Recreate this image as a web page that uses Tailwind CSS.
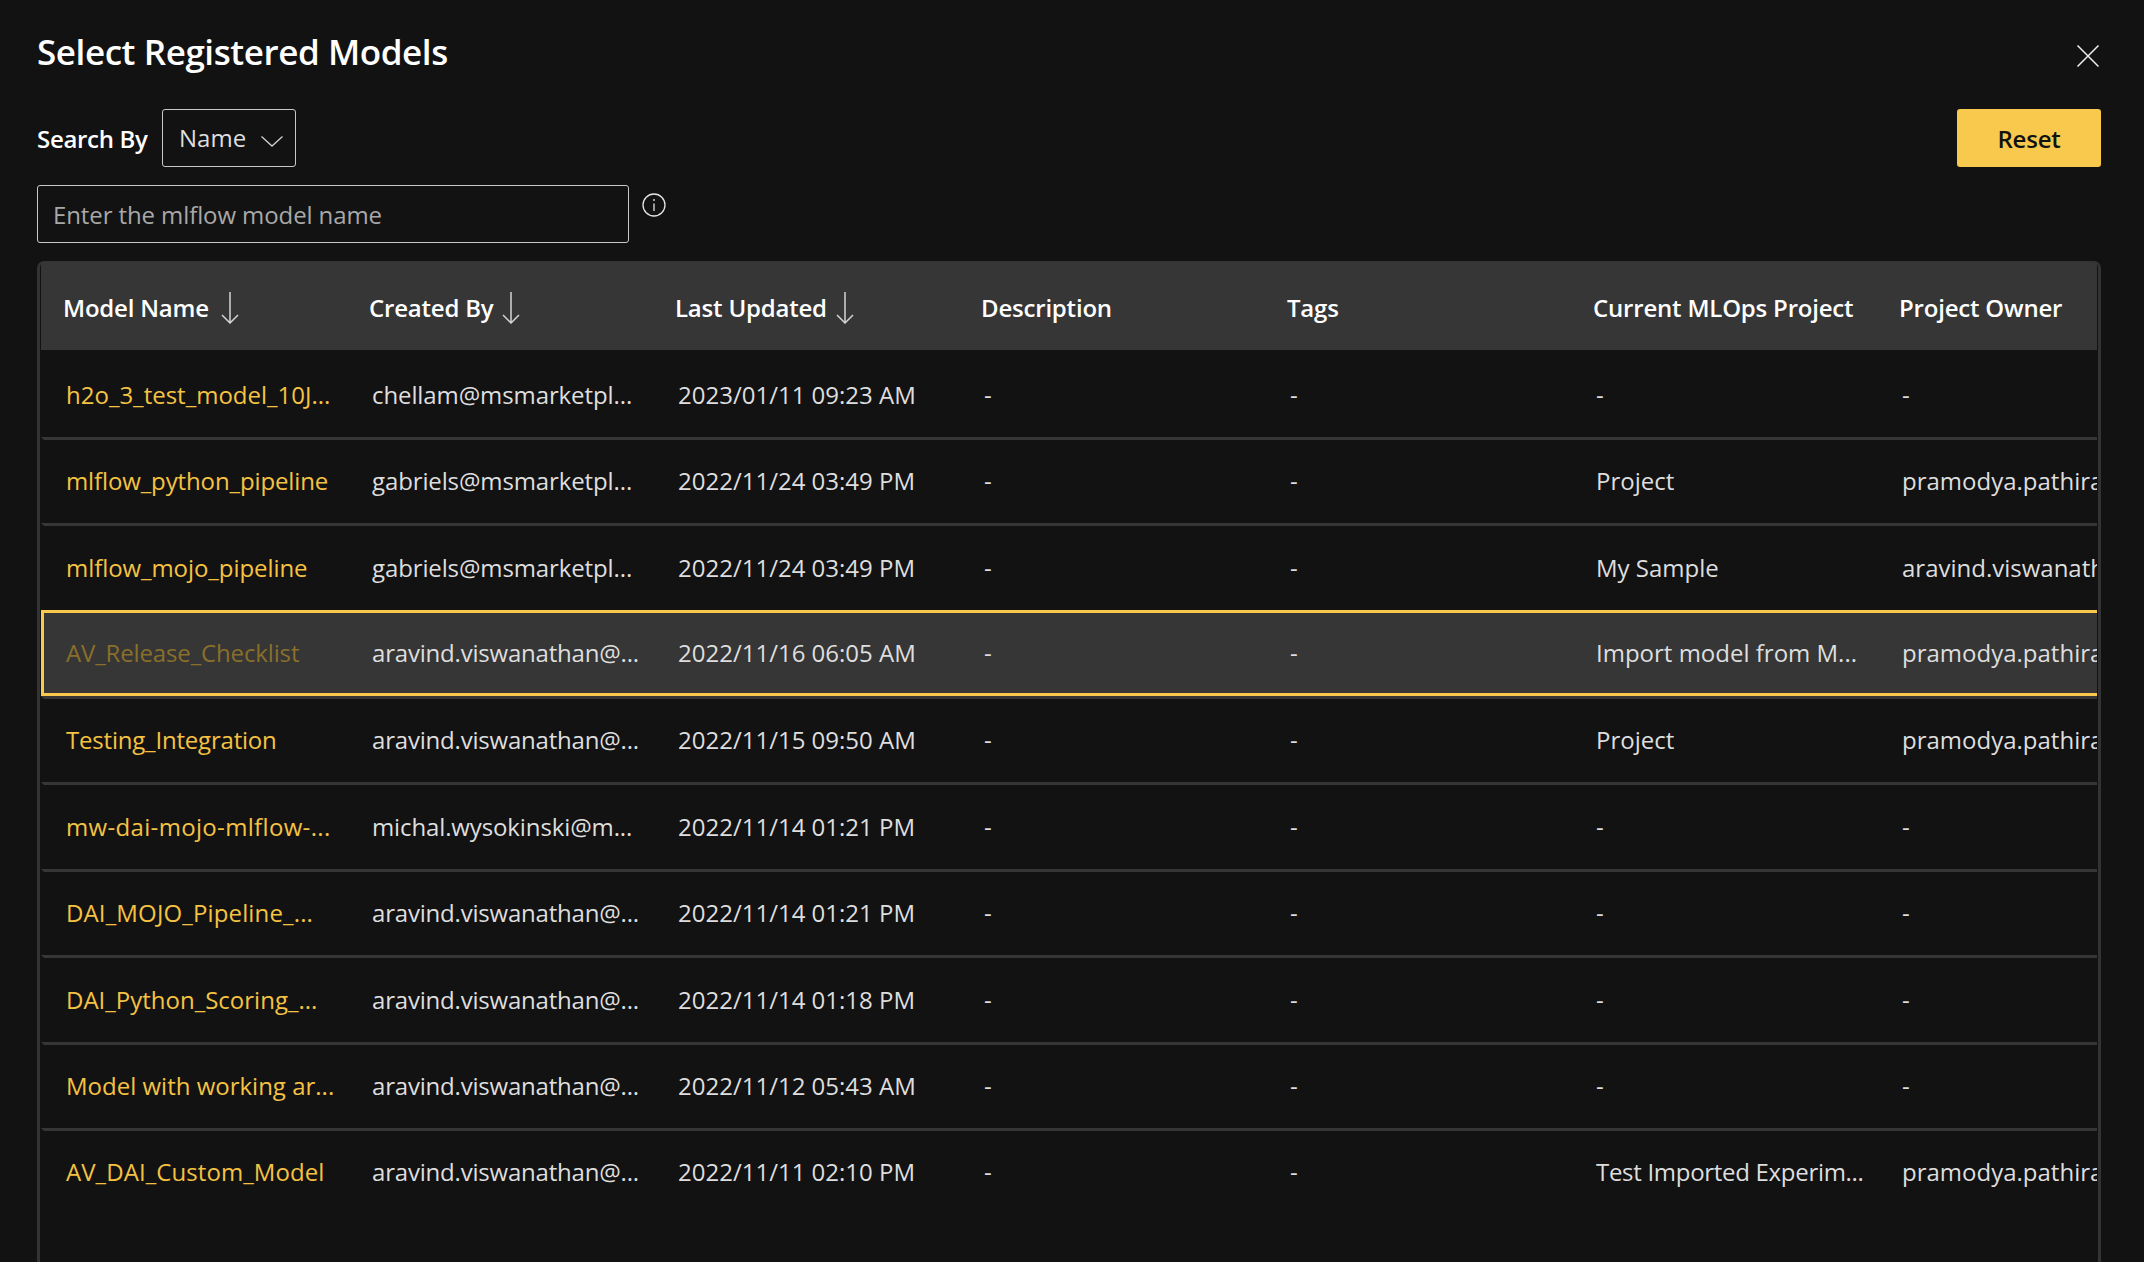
<!DOCTYPE html>
<html lang="en">
<head>
    <meta charset="UTF-8">
    <title>Select Registered Models</title>
    <script src="https://cdn.jsdelivr.net/npm/@tailwindcss/browser@4"></script>
</head>
<body class="bg-[#121212] h-screen overflow-hidden font-['Open_Sans',sans-serif] text-[24px] text-[#dedede]">
<div class="flex flex-col h-screen pl-[37px] pr-[43px]">

    <!-- title -->
    <div class="flex justify-between h-[109px] shrink-0">
        <h1 class="mt-[30px] text-[35px] leading-[44px] font-[550] tracking-[-0.42px] text-white">Select Registered Models</h1>
        <button class="mt-[45px] mr-[2px] h-[22px] text-[#eeeeee]">
            <svg width="22" height="22" viewBox="0 0 22 22" fill="none" stroke="currentColor" stroke-width="1.5"><path d="M0.5 0.5 21.5 21.5M21.5 0.5 0.5 21.5"/></svg>
        </button>
    </div>

    <!-- search by -->
    <div class="flex justify-between h-[58px] shrink-0">
        <div class="flex items-center">
            <span class="w-[125px] mt-[2px] font-[550] tracking-[-0.3px] text-white">Search By</span>
            <div class="flex items-center w-[134px] h-[58px] pl-[16px] border border-[#c8c8c8] rounded-[3px]">
                <span>Name</span>
                <svg class="ml-[15px] mt-[6px]" width="22" height="11" viewBox="0 0 22 11" fill="none" stroke="#cfcfcf" stroke-width="1.3"><path d="M0.5 0.5 11 10 21.5 0.5"/></svg>
            </div>
        </div>
        <button class="w-[144px] h-[58px] pt-[2px] bg-[#f8c94c] rounded-[3px] font-[550] tracking-[-0.2px] text-[#121212]">Reset</button>
    </div>

    <!-- model name input -->
    <div class="flex mt-[18px] h-[58px] shrink-0">
        <input class="w-[592px] h-[58px] px-[15px] bg-transparent border border-[#c8c8c8] rounded-[3px] tracking-[-0.1px] placeholder:text-[#a8a8a8] outline-none" placeholder="Enter the mlflow model name">
        <svg class="ml-[13px] mt-[8px]" width="24" height="24" viewBox="0 0 24 24" fill="none" stroke="#e4e4e4" stroke-width="1.3"><circle cx="12" cy="12" r="11"/><path d="M12 10.5V18M12 6V8"/></svg>
    </div>

    <!-- table -->
    <div class="mt-[18px] flex-1 min-h-0 px-px border-x-[3px] border-t border-[#333333] rounded-t-[7px]">
    <div class="h-full overflow-hidden">
        <div class="grid grid-cols-[repeat(7,306px)] items-center h-[88.4px] pt-[3px] bg-[#363636] font-[550] tracking-[-0.2px] text-white">
            <div class="pl-[22px] flex items-center">Model Name
                <svg class="ml-[12px]" width="18" height="32" viewBox="0 0 18 32" fill="none" stroke="#d4d4d4" stroke-width="1.5"><path d="M9 0V31M1 23 9 31 17 23"/></svg>
            </div>
            <div class="pl-[22px] flex items-center">Created By
                <svg class="ml-[9px]" width="18" height="32" viewBox="0 0 18 32" fill="none" stroke="#d4d4d4" stroke-width="1.5"><path d="M9 0V31M1 23 9 31 17 23"/></svg>
            </div>
            <div class="pl-[22px] flex items-center">Last Updated
                <svg class="ml-[9px]" width="18" height="32" viewBox="0 0 18 32" fill="none" stroke="#d4d4d4" stroke-width="1.5"><path d="M9 0V31M1 23 9 31 17 23"/></svg>
            </div>
            <div class="pl-[22px]">Description</div>
            <div class="pl-[22px]">Tags</div>
            <div class="pl-[22px] whitespace-nowrap">Current MLOps Project</div>
            <div class="pl-[22px] whitespace-nowrap">Project Owner</div>
        </div>

        <div class="w-max grid grid-cols-[repeat(7,306px)] items-center h-[86.4px] border-l-[3px] border-t-[3px] border-transparent whitespace-nowrap">
            <div class="pl-[22px] text-[#f5c242]">h2o_3_test_model_10J...</div><div class="pl-[22px] tracking-[-0.1px]">chellam@msmarketpl...</div><div class="pl-[22px]">2023/01/11 09:23 AM</div><div class="pl-[22px]">-</div><div class="pl-[22px]">-</div><div class="pl-[22px]">-</div><div class="pl-[22px]">-</div>
        </div>
        <div class="w-max grid grid-cols-[repeat(7,306px)] items-center h-[86.4px] border-l-[3px] border-t-[3px] border-[#363636] border-l-transparent whitespace-nowrap">
            <div class="pl-[22px] text-[#f5c242] tracking-[-0.12px]">mlflow_python_pipeline</div><div class="pl-[22px] tracking-[-0.12px]">gabriels@msmarketpl...</div><div class="pl-[22px]">2022/11/24 03:49 PM</div><div class="pl-[22px]">-</div><div class="pl-[22px]">-</div><div class="pl-[22px]">Project</div><div class="pl-[22px] overflow-hidden">pramodya.pathirana@h2o.ai</div>
        </div>
        <div class="w-max grid grid-cols-[repeat(7,306px)] items-center h-[86.4px] border-l-[3px] border-t-[3px] border-[#363636] border-l-transparent whitespace-nowrap">
            <div class="pl-[22px] text-[#f5c242] tracking-[-0.07px]">mlflow_mojo_pipeline</div><div class="pl-[22px] tracking-[-0.12px]">gabriels@msmarketpl...</div><div class="pl-[22px]">2022/11/24 03:49 PM</div><div class="pl-[22px]">-</div><div class="pl-[22px]">-</div><div class="pl-[22px]">My Sample</div><div class="pl-[22px] overflow-hidden">aravind.viswanathan@h2o.ai</div>
        </div>
        <div class="w-max grid grid-cols-[repeat(7,306px)] items-center h-[86.4px] border-[3px] border-[#f8c94c] bg-[#363636] whitespace-nowrap">
            <div class="pl-[22px] text-[#8a6f2a] tracking-[-0.14px]">AV_Release_Checklist</div><div class="pl-[22px] tracking-[-0.2px]">aravind.viswanathan@...</div><div class="pl-[22px]">2022/11/16 06:05 AM</div><div class="pl-[22px]">-</div><div class="pl-[22px]">-</div><div class="pl-[22px]">Import model from M...</div><div class="pl-[22px] overflow-hidden">pramodya.pathirana@h2o.ai</div>
        </div>
        <div class="w-max grid grid-cols-[repeat(7,306px)] items-center h-[86.4px] pb-[2px] border-l-[3px] border-t-[3px] border-[#363636] border-l-transparent whitespace-nowrap">
            <div class="pl-[22px] text-[#f5c242] tracking-[-0.2px]">Testing_Integration</div><div class="pl-[22px] tracking-[-0.2px]">aravind.viswanathan@...</div><div class="pl-[22px]">2022/11/15 09:50 AM</div><div class="pl-[22px]">-</div><div class="pl-[22px]">-</div><div class="pl-[22px]">Project</div><div class="pl-[22px] overflow-hidden">pramodya.pathirana@h2o.ai</div>
        </div>
        <div class="w-max grid grid-cols-[repeat(7,306px)] items-center h-[86.4px] border-l-[3px] border-t-[3px] border-[#363636] border-l-transparent whitespace-nowrap">
            <div class="pl-[22px] text-[#f5c242] tracking-[0.33px]">mw-dai-mojo-mlflow-...</div><div class="pl-[22px] tracking-[-0.12px]">michal.wysokinski@m...</div><div class="pl-[22px]">2022/11/14 01:21 PM</div><div class="pl-[22px]">-</div><div class="pl-[22px]">-</div><div class="pl-[22px]">-</div><div class="pl-[22px]">-</div>
        </div>
        <div class="w-max grid grid-cols-[repeat(7,306px)] items-center h-[86.4px] border-l-[3px] border-t-[3px] border-[#363636] border-l-transparent whitespace-nowrap">
            <div class="pl-[22px] text-[#f5c242] tracking-[0.14px]">DAI_MOJO_Pipeline_...</div><div class="pl-[22px] tracking-[-0.2px]">aravind.viswanathan@...</div><div class="pl-[22px]">2022/11/14 01:21 PM</div><div class="pl-[22px]">-</div><div class="pl-[22px]">-</div><div class="pl-[22px]">-</div><div class="pl-[22px]">-</div>
        </div>
        <div class="w-max grid grid-cols-[repeat(7,306px)] items-center h-[86.4px] border-l-[3px] border-t-[3px] border-[#363636] border-l-transparent whitespace-nowrap">
            <div class="pl-[22px] text-[#f5c242]">DAI_Python_Scoring_...</div><div class="pl-[22px] tracking-[-0.2px]">aravind.viswanathan@...</div><div class="pl-[22px]">2022/11/14 01:18 PM</div><div class="pl-[22px]">-</div><div class="pl-[22px]">-</div><div class="pl-[22px]">-</div><div class="pl-[22px]">-</div>
        </div>
        <div class="w-max grid grid-cols-[repeat(7,306px)] items-center h-[86.4px] border-l-[3px] border-t-[3px] border-[#363636] border-l-transparent whitespace-nowrap">
            <div class="pl-[22px] text-[#f5c242]">Model with working ar...</div><div class="pl-[22px] tracking-[-0.2px]">aravind.viswanathan@...</div><div class="pl-[22px]">2022/11/12 05:43 AM</div><div class="pl-[22px]">-</div><div class="pl-[22px]">-</div><div class="pl-[22px]">-</div><div class="pl-[22px]">-</div>
        </div>
        <div class="w-max grid grid-cols-[repeat(7,306px)] items-center h-[86.4px] pb-[2px] border-l-[3px] border-t-[3px] border-[#363636] border-l-transparent whitespace-nowrap">
            <div class="pl-[22px] text-[#f5c242] tracking-[0.07px]">AV_DAI_Custom_Model</div><div class="pl-[22px] tracking-[-0.2px]">aravind.viswanathan@...</div><div class="pl-[22px]">2022/11/11 02:10 PM</div><div class="pl-[22px]">-</div><div class="pl-[22px]">-</div><div class="pl-[22px] tracking-[-0.3px]">Test Imported Experim...</div><div class="pl-[22px] overflow-hidden">pramodya.pathirana@h2o.ai</div>
        </div>
    </div>
    </div>
</div>
</body>
</html>
